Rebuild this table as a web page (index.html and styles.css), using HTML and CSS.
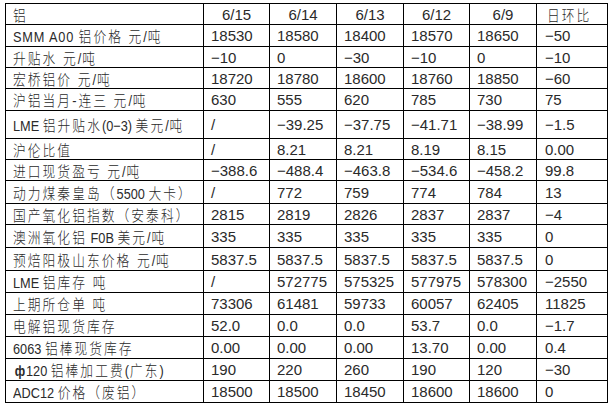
FILE: index.html
```html
<!DOCTYPE html>
<html lang="zh">
<head>
<meta charset="utf-8">
<title>铝</title>
<link rel="stylesheet" href="styles.css">
</head>
<body>
<div class="page">
  <div class="table">
    <div class="c lab"><span class="t">铝</span></div><div class="c hd">6/15</div><div class="c hd">6/14</div><div class="c hd">6/13</div><div class="c hd">6/12</div><div class="c hd">6/9</div><div class="c lab hl"><span class="t">日环比</span></div>

    <div class="c lab"><span class="t"><span class="en">SMM A00 </span>铝价格 元<span class="en">/</span>吨</span></div><div class="c">18530</div><div class="c">18580</div><div class="c">18400</div><div class="c">18570</div><div class="c">18650</div><div class="c last">−50</div>
    <div class="c lab"><span class="t">升贴水 元<span class="en">/</span>吨</span></div><div class="c">−10</div><div class="c">0</div><div class="c">−30</div><div class="c">−10</div><div class="c">0</div><div class="c last">−10</div>
    <div class="c lab"><span class="t">宏桥铝价 元<span class="en">/</span>吨</span></div><div class="c">18720</div><div class="c">18780</div><div class="c">18600</div><div class="c">18760</div><div class="c">18850</div><div class="c last">−60</div>
    <div class="c lab"><span class="t">沪铝当月-连三 元<span class="en">/</span>吨</span></div><div class="c">630</div><div class="c">555</div><div class="c">620</div><div class="c">785</div><div class="c">730</div><div class="c last">75</div>
    <div class="c lab"><span class="t"><span class="en tight">LME </span>铝升贴水<span class="en tight">(0−3) </span>美元<span class="en">/</span>吨</span></div><div class="c">/</div><div class="c">−39.25</div><div class="c">−37.75</div><div class="c">−41.71</div><div class="c">−38.99</div><div class="c last">−1.5</div>
    <div class="c lab"><span class="t">沪伦比值</span></div><div class="c">/</div><div class="c">8.21</div><div class="c">8.21</div><div class="c">8.19</div><div class="c">8.15</div><div class="c last">0.00</div>
    <div class="c lab"><span class="t">进口现货盈亏 元<span class="en">/</span>吨</span></div><div class="c">−388.6</div><div class="c">−488.4</div><div class="c">−463.8</div><div class="c">−534.6</div><div class="c">−458.2</div><div class="c last">99.8</div>
    <div class="c lab"><span class="t">动力煤秦皇岛（<span class="en tight">5500 </span>大卡）</span></div><div class="c">/</div><div class="c">772</div><div class="c">759</div><div class="c">774</div><div class="c">784</div><div class="c last">13</div>
    <div class="c lab"><span class="t">国产氧化铝指数（安泰科）</span></div><div class="c">2815</div><div class="c">2819</div><div class="c">2826</div><div class="c">2837</div><div class="c">2837</div><div class="c last">−4</div>
    <div class="c lab"><span class="t">澳洲氧化铝<span class="en tight"> F0B </span>美元<span class="en">/</span>吨</span></div><div class="c">335</div><div class="c">335</div><div class="c">335</div><div class="c">335</div><div class="c">335</div><div class="c last">0</div>
    <div class="c lab"><span class="t">预焙阳极山东价格 元<span class="en">/</span>吨</span></div><div class="c">5837.5</div><div class="c">5837.5</div><div class="c">5837.5</div><div class="c">5837.5</div><div class="c">5837.5</div><div class="c last">0</div>
    <div class="c lab"><span class="t"><span class="en tight">LME </span>铝库存 吨</span></div><div class="c">/</div><div class="c">572775</div><div class="c">575325</div><div class="c">577975</div><div class="c">578300</div><div class="c last">−2550</div>
    <div class="c lab"><span class="t">上期所仓单 吨</span></div><div class="c">73306</div><div class="c">61481</div><div class="c">59733</div><div class="c">60057</div><div class="c">62405</div><div class="c last">11825</div>
    <div class="c lab"><span class="t">电解铝现货库存</span></div><div class="c">52.0</div><div class="c">0.0</div><div class="c">0.0</div><div class="c">53.7</div><div class="c">0.0</div><div class="c last">−1.7</div>
    <div class="c lab"><span class="t"><span class="en tight">6063 </span>铝棒现货库存</span></div><div class="c">0.00</div><div class="c">0.00</div><div class="c">0.00</div><div class="c">13.70</div><div class="c">0.00</div><div class="c last">0.4</div>
    <div class="c lab"><span class="t"><span class="phi">ф</span><span class="en tight">120 </span>铝棒加工费<span class="en">(</span>广东<span class="en">)</span></span></div><div class="c">190</div><div class="c">220</div><div class="c">260</div><div class="c">190</div><div class="c">120</div><div class="c last">−30</div>
    <div class="c lab"><span class="t"><span class="en tight">ADC12 </span>价格（废铝）</span></div><div class="c">18500</div><div class="c">18500</div><div class="c">18450</div><div class="c">18600</div><div class="c">18600</div><div class="c last">0</div>
  </div>
</div>
</body>
</html>
```

FILE: styles.css
```css
html, body {
  margin: 0;
  padding: 0;
  background: #ffffff;
}

.page {
  padding: 3px 0 0 5px;
}

.table {
  display: inline-grid;
  grid-template-columns: 197px 65px 66px 66px 65px 66px 70px;
  grid-template-rows: 20px 21px 20px 20px 21px 27px 20px 20px 22px 20px 22px 22px 21px 21px 21px 21px 21px 21px;
  gap: 1px;
  padding: 1px;
  background: #000000;
}

.c {
  background: #ffffff;
  display: flex;
  align-items: center;
  padding-left: 7px;
  font-family: "Liberation Sans Narrow", "Liberation Sans", "Noto Sans CJK SC", sans-serif;
  font-size: 15px;
  color: #2a2a2a;
  white-space: nowrap;
  overflow: hidden;
}

.lab {
  font-weight: 300;
}

.t {
  display: inline-block;
  letter-spacing: 2.4px;
  transform: scaleX(0.85);
  transform-origin: left center;
}

.en {
  letter-spacing: 1px;
}

.tight {
  letter-spacing: 0;
}

.hd {
  justify-content: center;
  padding-left: 0;
}

.hl {
  padding-left: 10px;
}

.last {
  padding-left: 8px;
}

.phi {
  font-family: "Liberation Sans", sans-serif;
  font-weight: bold;
  font-size: 14px;
  letter-spacing: 1px;
  margin-left: 2px;
}
```
